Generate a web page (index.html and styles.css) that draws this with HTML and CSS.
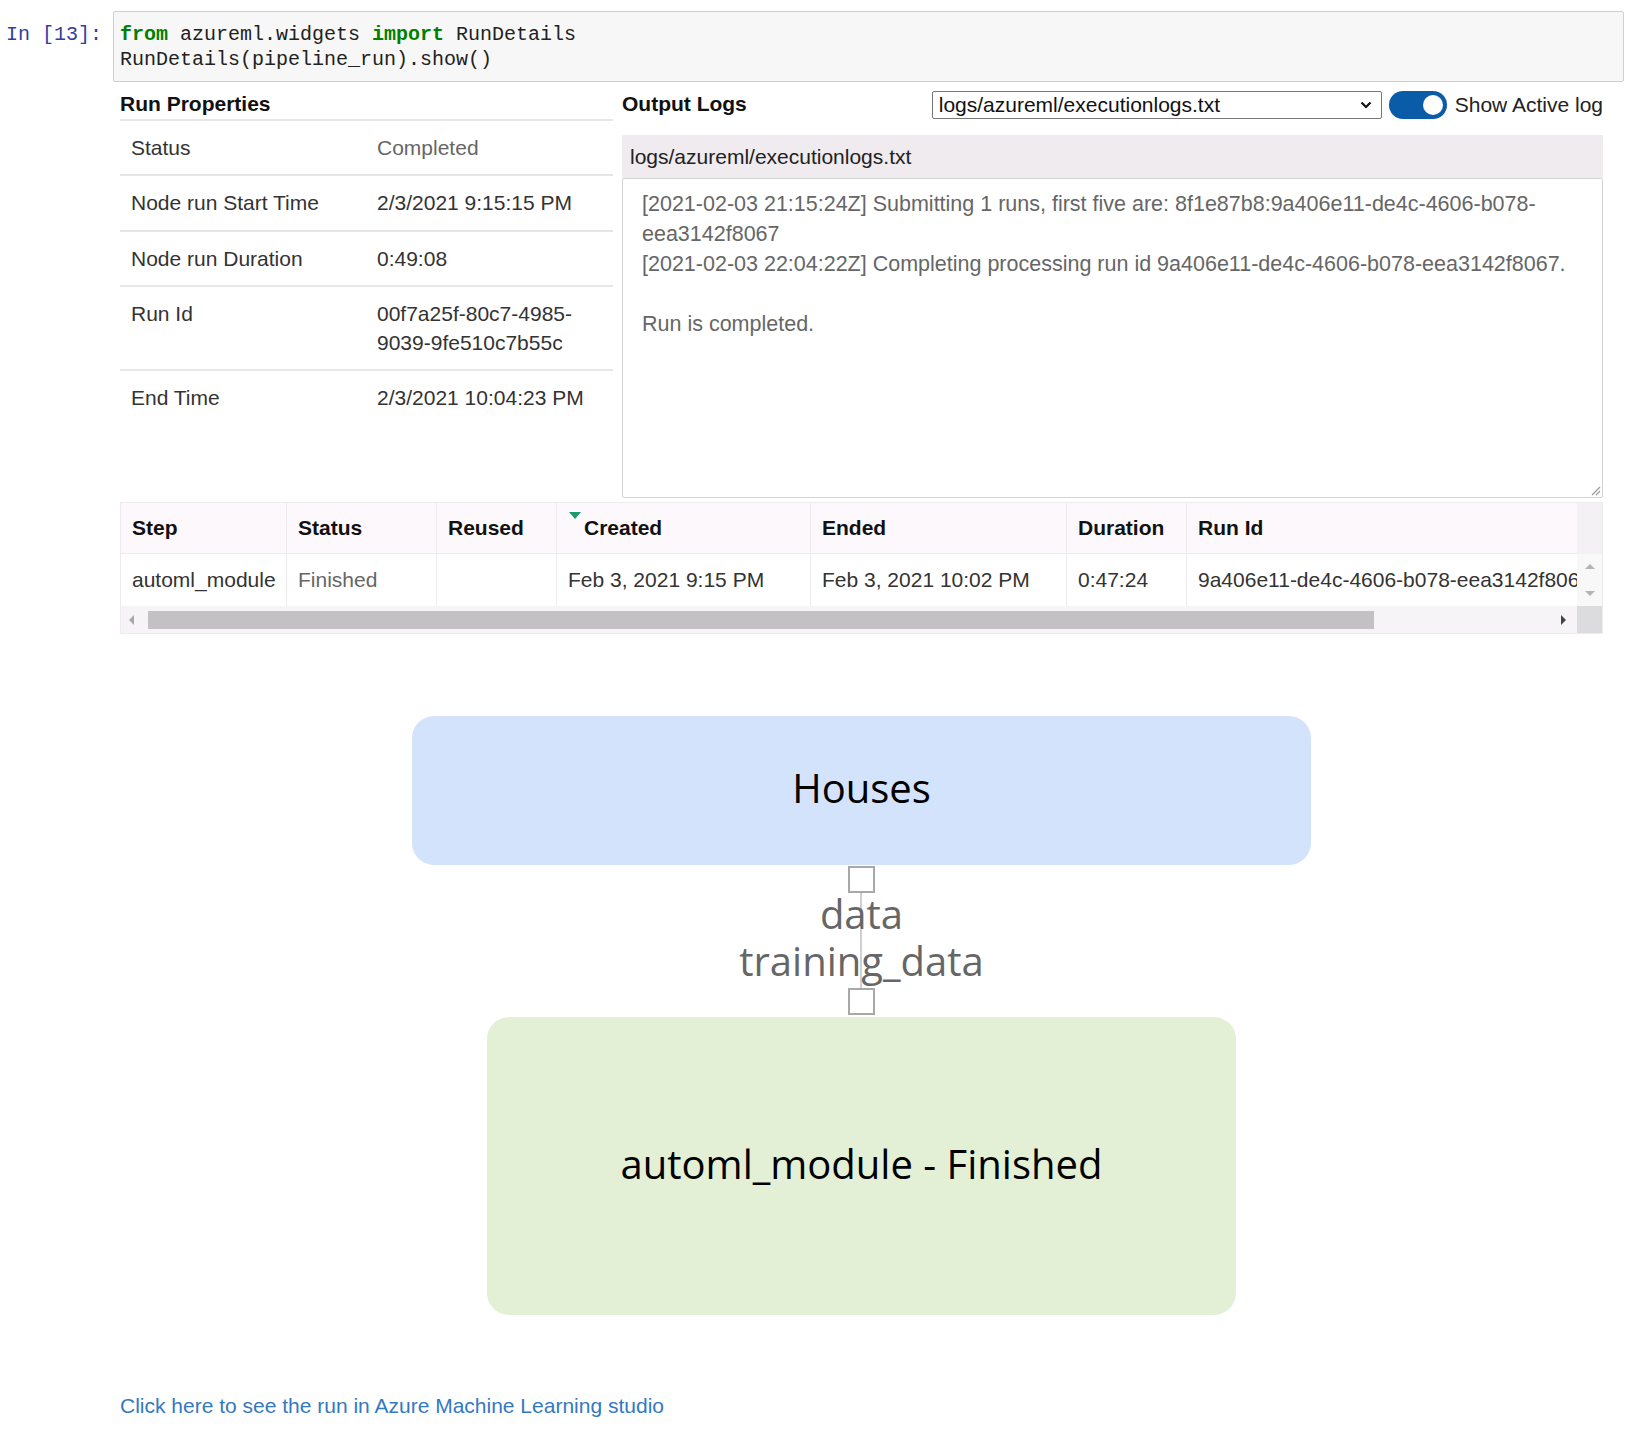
FILE: index.html
```html
<!DOCTYPE html>
<html>
<head>
<meta charset="utf-8">
<title>RunDetails</title>
<link rel="stylesheet" href="styles.css">
</head>
<body>
<div class="cell">
  <div class="prompt">In [13]:</div>
  <div class="code">
    <div class="code-line"><span class="kw">from</span> azureml.widgets <span class="kw">import</span> RunDetails</div>
    <div class="code-line">RunDetails(pipeline_run).show()</div>
  </div>
</div>

<div class="output">
  <div class="top">
    <section class="props">
      <h2 class="heading props-heading">Run Properties</h2>
      <div class="prop-row"><div class="prop-label">Status</div><div class="prop-value muted">Completed</div></div>
      <div class="prop-row"><div class="prop-label">Node run Start Time</div><div class="prop-value">2/3/2021 9:15:15 PM</div></div>
      <div class="prop-row"><div class="prop-label">Node run Duration</div><div class="prop-value">0:49:08</div></div>
      <div class="prop-row"><div class="prop-label">Run Id</div><div class="prop-value">00f7a25f-80c7-4985-<br>9039-9fe510c7b55c</div></div>
      <div class="prop-row"><div class="prop-label">End Time</div><div class="prop-value">2/3/2021 10:04:23 PM</div></div>
    </section>

    <section class="logs">
      <div class="logs-head">
        <h2 class="heading logs-heading">Output Logs</h2>
        <div class="select">
          <span>logs/azureml/executionlogs.txt</span>
          <svg class="chev" width="12" height="8" viewBox="0 0 12 8"><path d="M1.5 1.5 L6 6 L10.5 1.5" fill="none" stroke="#111" stroke-width="2.2"/></svg>
        </div>
        <div class="toggle"><span class="knob"></span></div>
        <span class="toggle-label">Show Active log</span>
      </div>
      <div class="log-title">logs/azureml/executionlogs.txt</div>
      <div class="log-body">
        <div>[2021-02-03 21:15:24Z] Submitting 1 runs, first five are: 8f1e87b8:9a406e11-de4c-4606-b078-</div>
        <div>eea3142f8067</div>
        <div>[2021-02-03 22:04:22Z] Completing processing run id 9a406e11-de4c-4606-b078-eea3142f8067.</div>
        <div>&nbsp;</div>
        <div>Run is completed.</div>
        <svg class="grip" width="12" height="12" viewBox="0 0 12 12"><path d="M11 3 L3 11 M11 7 L7 11" stroke="#9a9a9a" stroke-width="1.2"/></svg>
      </div>
    </section>
  </div>

  <div class="grid">
    <div class="grid-main">
      <div class="grid-row grid-head">
        <div class="gc">Step</div>
        <div class="gc">Status</div>
        <div class="gc">Reused</div>
        <div class="gc sorted"><span class="sort-mark"></span>Created</div>
        <div class="gc">Ended</div>
        <div class="gc">Duration</div>
        <div class="gc">Run Id</div>
      </div>
      <div class="grid-row grid-data">
        <div class="gc">automl_module</div>
        <div class="gc muted">Finished</div>
        <div class="gc"></div>
        <div class="gc">Feb 3, 2021 9:15 PM</div>
        <div class="gc">Feb 3, 2021 10:02 PM</div>
        <div class="gc">0:47:24</div>
        <div class="gc">9a406e11-de4c-4606-b078-eea3142f8067</div>
      </div>
      <div class="hscroll">
        <span class="arr arr-left"></span>
        <span class="thumb"></span>
        <span class="arr arr-right"></span>
      </div>
    </div>
    <div class="vscroll">
      <div class="vs-head"></div>
      <div class="vs-body"><span class="arr arr-up"></span><span class="arr arr-down"></span></div>
      <div class="vs-corner"></div>
    </div>
  </div>

  <div class="diagram">
    <div class="node node-data">Houses</div>
    <div class="port port-top"></div>
    <div class="edge">
      <div class="edge-label">data</div>
      <div class="edge-label">training_data</div>
    </div>
    <div class="port"></div>
    <div class="node node-module">automl_module - Finished</div>
  </div>

  <a class="studio-link" href="#">Click here to see the run in Azure Machine Learning studio</a>
</div>
</body>
</html>
```

FILE: styles.css
```css
* { box-sizing: border-box; }

body {
  margin: 0;
  background: #fff;
  font-family: "Liberation Sans", Arial, sans-serif;
  font-size: 21px;
  color: #333;
}

/* code cell */
.cell {
  display: flex;
  padding-top: 11px;
  padding-right: 11px;
}
.prompt {
  width: 113px;
  flex: none;
  padding-right: 11px;
  padding-top: 11px;
  text-align: right;
  font-family: "Liberation Mono", monospace;
  font-size: 20px;
  line-height: 25px;
  color: #303f9f;
}
.code {
  flex: 1;
  background: #f7f7f7;
  border: 1px solid #cfcfcf;
  border-radius: 2px;
  padding: 10px 6px 9px;
  font-family: "Liberation Mono", monospace;
  font-size: 20px;
  line-height: 25px;
  color: #222;
}
.code-line { white-space: pre; }
.kw { color: #008000; font-weight: bold; }

/* output */
.output {
  margin-left: 120px;
  width: 1483px;
}
.top {
  display: flex;
  gap: 9px;
  margin-top: 6px;
}
.heading {
  margin: 0;
  font-size: 21px;
  font-weight: bold;
  color: #111;
  line-height: 31px;
}
.props { width: 493px; flex: none; }
.props-heading { border-bottom: 2px solid #e6e6e6; }
.prop-row {
  display: flex;
  padding: 12px 0 12.3px;
  line-height: 29px;
  border-bottom: 2px solid #e6e6e6;
}
.prop-row:last-child { border-bottom: none; }
.prop-label { width: 257px; flex: none; padding-left: 11px; }
.prop-value { flex: 1; }
.muted { color: #666; }

.logs { flex: 1; }
.logs-head {
  display: flex;
  align-items: center;
  height: 34px;
}
.logs-heading { align-self: flex-start; }
.select {
  margin-left: auto;
  width: 450px;
  height: 28px;
  border: 1px solid #767676;
  border-radius: 2px;
  display: flex;
  align-items: center;
  justify-content: space-between;
  padding: 0 9px 0 6px;
  color: #111;
}
.toggle {
  margin-left: 7px;
  width: 58px;
  height: 28px;
  border-radius: 14px;
  background: #0a5ca9;
  display: flex;
  align-items: center;
  justify-content: flex-end;
  padding-right: 4px;
}
.knob {
  width: 20px;
  height: 20px;
  border-radius: 50%;
  background: #fff;
}
.toggle-label { margin-left: 8px; color: #222; }

.log-title {
  margin-top: 13px;
  height: 43px;
  line-height: 43px;
  background: #efebef;
  padding-left: 8px;
  color: #222;
}
.log-body {
  position: relative;
  height: 320px;
  border: 1px solid #d4d4d4;
  border-radius: 2px;
  padding: 10px 19px;
  font-size: 21.5px;
  line-height: 30px;
  color: #666;
  white-space: nowrap;
}
.grip { position: absolute; right: 1px; bottom: 1px; }

/* step grid */
.grid {
  margin-top: 4px;
  border: 1px solid #eeebee;
  display: flex;
}
.grid-main { width: 1456px; flex: none; overflow: hidden; }
.grid-row {
  display: grid;
  grid-template-columns: 166px 150px 120px 254px 256px 120px 390px;
}
.gc {
  padding-left: 11px;
  border-right: 1px solid #eeebee;
  white-space: nowrap;
  overflow: hidden;
  display: flex;
  align-items: center;
}
.gc:last-child { border-right: none; }
.grid-head { height: 51px; background: #fcf8fc; border-bottom: 1px solid #eeebee; }
.grid-head .gc { font-weight: bold; color: #111; }
.grid-data { height: 52px; background: #fff; }
.sorted { position: relative; padding-left: 27px; }
.sort-mark {
  position: absolute;
  left: 12px;
  top: 9px;
  width: 0;
  height: 0;
  border-left: 6px solid transparent;
  border-right: 6px solid transparent;
  border-top: 7px solid #1a9b6c;
}

.hscroll {
  height: 27px;
  background: #f6f4f6;
  display: flex;
  align-items: center;
}
.thumb {
  margin-left: 14px;
  width: 1226px;
  height: 18px;
  background: #c3c1c4;
}
.arr { width: 0; height: 0; display: block; }
.arr-left {
  margin-left: 8px;
  border-top: 5px solid transparent;
  border-bottom: 5px solid transparent;
  border-right: 5px solid #a8a8a8;
}
.arr-right {
  margin-left: auto;
  margin-right: 11px;
  border-top: 5px solid transparent;
  border-bottom: 5px solid transparent;
  border-left: 5px solid #444;
}
.vscroll { flex: 1; display: flex; flex-direction: column; }
.vs-head { height: 51px; background: #f3f1f3; }
.vs-body {
  height: 52px;
  background: #f9f8f9;
  display: flex;
  flex-direction: column;
  align-items: center;
  justify-content: space-between;
  padding: 10px 0 10px;
}
.arr-up {
  border-left: 5px solid transparent;
  border-right: 5px solid transparent;
  border-bottom: 5px solid #b4b4b4;
}
.arr-down {
  border-left: 5px solid transparent;
  border-right: 5px solid transparent;
  border-top: 5px solid #b4b4b4;
}
.vs-corner { height: 27px; background: #dcdbdd; }

/* diagram */
.diagram {
  margin-top: 82px;
  display: flex;
  flex-direction: column;
  align-items: center;
  font-family: "Open Sans", "Noto Sans", sans-serif;
  font-size: 40px;
}
.node {
  display: flex;
  align-items: center;
  justify-content: center;
  border-radius: 22px;
  color: #000;
  padding-bottom: 6px;
}
.node-data { width: 899px; height: 149px; background: #d4e3fc; }
.node-module { width: 749px; height: 298px; background: #e4f0d5; margin-top: 2px; }
.port {
  width: 27px;
  height: 27px;
  border: 2px solid #a8a8a8;
  background: #fff;
}
.port-top { margin-top: 1px; }
.edge {
  position: relative;
  height: 95px;
  display: flex;
  flex-direction: column;
  align-items: center;
  justify-content: center;
  padding-bottom: 7px;
}
.edge::before {
  content: "";
  position: absolute;
  left: 50%;
  top: 0;
  bottom: 0;
  width: 2px;
  margin-left: -1px;
  background: #d0d0d0;
}
.edge-label {
  position: relative;
  line-height: 47px;
  color: #666;
}

.studio-link {
  display: block;
  margin-top: 76px;
  line-height: 29px;
  color: #3479c0;
  text-decoration: none;
  width: max-content;
}
```
